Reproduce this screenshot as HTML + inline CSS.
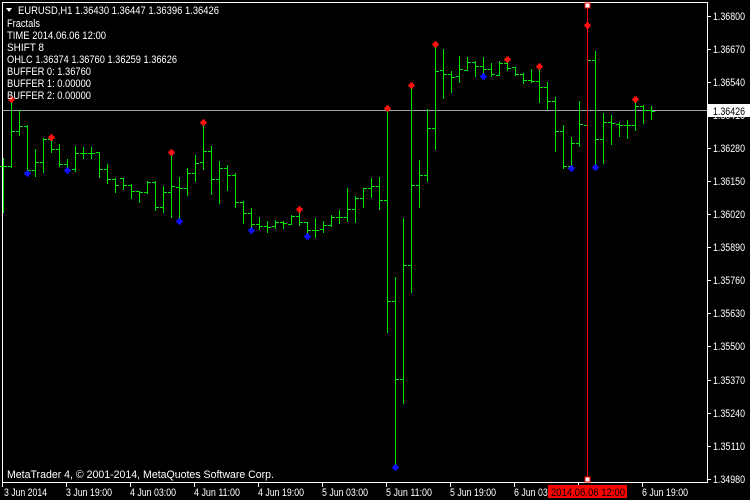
<!DOCTYPE html>
<html><head><meta charset="utf-8"><style>
html,body{margin:0;padding:0;background:#000;width:750px;height:500px;overflow:hidden}
svg{display:block}
text{font-family:"Liberation Sans",sans-serif;font-size:11px;fill:#fff}
</style></head><body>
<svg width="750" height="500" viewBox="0 0 750 500" shape-rendering="crispEdges">
<rect width="750" height="500" fill="#000"/>
<path d="M2.5 2.5H707.5V482.5H2.5Z" fill="none" stroke="#fff" stroke-width="1"/>
<path d="M3 110.5H707" stroke="#9aa4ae" stroke-width="1"/>
<path fill="none" stroke="#00e600" stroke-width="1" d="M3.5 158V213M0 166.5h3M4 166.5h3M11.5 100V168M8 166.5h3M12 131.5h3M19.5 110V136M16 131.5h3M20 126.5h3M27.5 125V174M24 126.5h3M28 170.5h3M35.5 149V177M32 170.5h3M36 162.5h3M43.5 138V173M40 162.5h3M44 139.5h3M51.5 138V153M48 139.5h3M52 149.5h3M59.5 144V167M56 149.5h3M60 164.5h3M67.5 159V171M64 164.5h3M68 169.5h3M75.5 146V172M72 169.5h3M76 153.5h3M83.5 147V159M80 153.5h3M84 153.5h3M91.5 147V159M88 153.5h3M92 153.5h3M99.5 152V178M96 152.5h3M100 169.5h3M107.5 164V184M104 169.5h3M108 179.5h3M115.5 178V193M112 179.5h3M116 185.5h3M123.5 178V190M120 178.5h3M124 185.5h3M131.5 184V199M128 185.5h3M132 191.5h3M139.5 191V203M136 191.5h3M140 192.5h3M147.5 181V194M144 192.5h3M148 182.5h3M155.5 181V211M152 182.5h3M156 207.5h3M163.5 186V213M160 207.5h3M164 192.5h3M171.5 155V218M168 192.5h3M172 186.5h3M179.5 177V223M176 187.5h3M180 188.5h3M187.5 168V196M184 188.5h3M188 173.5h3M195.5 155V182M192 173.5h3M196 163.5h3M203.5 122V170M200 162.5h3M204 151.5h3M211.5 146V195M208 151.5h3M212 179.5h3M219.5 161V204M216 179.5h3M220 168.5h3M227.5 165V191M224 168.5h3M228 175.5h3M235.5 173V208M232 175.5h3M236 202.5h3M243.5 201V224M240 202.5h3M244 213.5h3M251.5 208V229M248 213.5h3M252 224.5h3M259.5 217V230M256 224.5h3M260 226.5h3M267.5 221V233M264 226.5h3M268 227.5h3M275.5 220V229M272 226.5h3M276 222.5h3M283.5 221V229M280 222.5h3M284 223.5h3M291.5 215V225M288 224.5h3M292 216.5h3M299.5 209V226M296 216.5h3M300 222.5h3M307.5 222V235M304 222.5h3M308 230.5h3M315.5 218V238M312 230.5h3M316 230.5h3M323.5 221V233M320 229.5h3M324 225.5h3M331.5 215V227M328 225.5h3M332 217.5h3M339.5 210V224M336 217.5h3M340 217.5h3M347.5 188V222M344 217.5h3M348 209.5h3M355.5 196V223M352 209.5h3M356 198.5h3M363.5 188V208M360 198.5h3M364 188.5h3M371.5 178V198M368 188.5h3M372 186.5h3M379.5 177V210M376 186.5h3M380 200.5h3M387.5 109V333M384 200.5h3M388 301.5h3M395.5 277V468M392 301.5h3M396 379.5h3M403.5 218V404M400 379.5h3M404 265.5h3M411.5 85V293M408 265.5h3M412 185.5h3M419.5 160V208M416 185.5h3M420 175.5h3M427.5 109V182M424 175.5h3M428 128.5h3M435.5 44V150M432 128.5h3M436 71.5h3M443.5 49V99M440 70.5h3M444 74.5h3M451.5 71V93M448 74.5h3M452 77.5h3M459.5 56V83M456 76.5h3M460 69.5h3M467.5 57V71M464 70.5h3M468 62.5h3M475.5 61V77M472 62.5h3M476 66.5h3M483.5 57V76M480 66.5h3M484 69.5h3M491.5 63V77M488 69.5h3M492 74.5h3M499.5 61V76M496 75.5h3M500 63.5h3M507.5 59V71M504 63.5h3M508 68.5h3M515.5 67V76M512 67.5h3M516 74.5h3M523.5 73V84M520 74.5h3M524 80.5h3M531.5 69V83M528 80.5h3M532 81.5h3M539.5 66V103M536 81.5h3M540 87.5h3M547.5 82V110M544 87.5h3M548 101.5h3M555.5 97V152M552 101.5h3M556 131.5h3M563.5 125V169M560 131.5h3M564 166.5h3M571.5 137V168M568 166.5h3M572 143.5h3M579.5 101V147M576 143.5h3M580 124.5h3M587.5 26V155M584 125.5h3M588 60.5h3M595.5 51V168M592 60.5h3M596 139.5h3M603.5 113V164M600 139.5h3M604 122.5h3M611.5 115V145M608 122.5h3M612 123.5h3M619.5 122V137M616 124.5h3M620 125.5h3M627.5 120V139M624 125.5h3M628 125.5h3M635.5 99V131M632 125.5h3M636 106.5h3M643.5 105V124M640 106.5h3M644 110.5h3M651.5 106V120M648 110.5h3M652 111.5h3"/>
<path d="M587.5 5V480" stroke="#f00" stroke-width="1"/>
<rect x="585" y="3" width="5" height="5" fill="#fff" stroke="#f00" stroke-width="1"/>
<rect x="585" y="477" width="5" height="5" fill="#fff" stroke="#f00" stroke-width="1"/>
<defs>
<path id="fr" d="M-1 -2.5h3v6h-3zM-2.5 -1h6v3h-6z"/>
</defs>
<g fill="#ff1010">
<use href="#fr" x="11" y="99"/><use href="#fr" x="51" y="137"/><use href="#fr" x="171" y="152"/><use href="#fr" x="203" y="122"/><use href="#fr" x="299" y="209"/><use href="#fr" x="387" y="108"/><use href="#fr" x="411" y="85"/><use href="#fr" x="435" y="44"/><use href="#fr" x="507" y="59"/><use href="#fr" x="539" y="66"/><use href="#fr" x="587" y="25"/><use href="#fr" x="635" y="99"/>
</g>
<g fill="#1010ff">
<use href="#fr" x="27" y="173"/><use href="#fr" x="67" y="170"/><use href="#fr" x="179" y="221"/><use href="#fr" x="251" y="230"/><use href="#fr" x="307" y="236"/><use href="#fr" x="395" y="467"/><use href="#fr" x="483" y="76"/><use href="#fr" x="571" y="168"/><use href="#fr" x="595" y="167"/>
</g>
<path stroke="#fff" stroke-width="1" d="M707 16.5h4M707 49.5h4M707 82.5h4M707 115.5h4M707 148.5h4M707 181.5h4M707 214.5h4M707 247.5h4M707 280.5h4M707 313.5h4M707 346.5h4M707 380.5h4M707 413.5h4M707 446.5h4M707 479.5h4"/>
<g lengthAdjust="spacingAndGlyphs">
<text x="713" y="20" textLength="32" lengthAdjust="spacingAndGlyphs">1.36800</text>
<text x="713" y="53" textLength="32" lengthAdjust="spacingAndGlyphs">1.36670</text>
<text x="713" y="86" textLength="32" lengthAdjust="spacingAndGlyphs">1.36540</text>
<text x="713" y="119" textLength="32" lengthAdjust="spacingAndGlyphs">1.36410</text>
<text x="713" y="152" textLength="32" lengthAdjust="spacingAndGlyphs">1.36280</text>
<text x="713" y="185" textLength="32" lengthAdjust="spacingAndGlyphs">1.36150</text>
<text x="713" y="218" textLength="32" lengthAdjust="spacingAndGlyphs">1.36020</text>
<text x="713" y="251" textLength="32" lengthAdjust="spacingAndGlyphs">1.35890</text>
<text x="713" y="284" textLength="32" lengthAdjust="spacingAndGlyphs">1.35760</text>
<text x="713" y="317" textLength="32" lengthAdjust="spacingAndGlyphs">1.35630</text>
<text x="713" y="350" textLength="32" lengthAdjust="spacingAndGlyphs">1.35500</text>
<text x="713" y="384" textLength="32" lengthAdjust="spacingAndGlyphs">1.35370</text>
<text x="713" y="417" textLength="32" lengthAdjust="spacingAndGlyphs">1.35240</text>
<text x="713" y="450" textLength="32" lengthAdjust="spacingAndGlyphs">1.35110</text>
<text x="713" y="483" textLength="32" lengthAdjust="spacingAndGlyphs">1.34980</text>
</g>
<rect x="708" y="104" width="42" height="13" fill="#fff"/>
<text x="713" y="115" style="fill:#000" textLength="32" lengthAdjust="spacingAndGlyphs">1.36426</text>
<path stroke="#fff" stroke-width="1" d="M2.5 482v5M66.5 482v5M130.5 482v5M194.5 482v5M258.5 482v5M322.5 482v5M386.5 482v5M450.5 482v5M514.5 482v5M578.5 482v5M642.5 482v5"/>
<g>
<text x="4" y="496" textLength="43" lengthAdjust="spacingAndGlyphs">3 Jun 2014</text>
<text x="66" y="496" textLength="46" lengthAdjust="spacingAndGlyphs">3 Jun 19:00</text>
<text x="130" y="496" textLength="46" lengthAdjust="spacingAndGlyphs">4 Jun 03:00</text>
<text x="194" y="496" textLength="46" lengthAdjust="spacingAndGlyphs">4 Jun 11:00</text>
<text x="258" y="496" textLength="46" lengthAdjust="spacingAndGlyphs">4 Jun 19:00</text>
<text x="322" y="496" textLength="46" lengthAdjust="spacingAndGlyphs">5 Jun 03:00</text>
<text x="386" y="496" textLength="46" lengthAdjust="spacingAndGlyphs">5 Jun 11:00</text>
<text x="450" y="496" textLength="46" lengthAdjust="spacingAndGlyphs">5 Jun 19:00</text>
<text x="514" y="496" textLength="46" lengthAdjust="spacingAndGlyphs">6 Jun 03:00</text>
<text x="642" y="496" textLength="46" lengthAdjust="spacingAndGlyphs">6 Jun 19:00</text>
</g>
<rect x="548" y="485" width="79" height="13" fill="#f00"/>
<text x="551" y="496" style="fill:#000" textLength="74" lengthAdjust="spacingAndGlyphs">2014.06.06 12:00</text>
<path d="M6 8h6l-3 4z" fill="#fff"/>
<text x="18" y="14" textLength="201" lengthAdjust="spacingAndGlyphs">EURUSD,H1  1.36430 1.36447 1.36396 1.36426</text>
<text x="7" y="27" textLength="33" lengthAdjust="spacingAndGlyphs">Fractals</text>
<text x="7" y="39" textLength="99" lengthAdjust="spacingAndGlyphs">TIME 2014.06.06 12:00</text>
<text x="7" y="51" textLength="37" lengthAdjust="spacingAndGlyphs">SHIFT 8</text>
<text x="7" y="63" textLength="170" lengthAdjust="spacingAndGlyphs">OHLC 1.36374 1.36760 1.36259 1.36626</text>
<text x="7" y="75" textLength="84" lengthAdjust="spacingAndGlyphs">BUFFER 0: 1.36760</text>
<text x="7" y="87" textLength="84" lengthAdjust="spacingAndGlyphs">BUFFER 1: 0.00000</text>
<text x="7" y="99" textLength="84" lengthAdjust="spacingAndGlyphs">BUFFER 2: 0.00000</text>
<text x="7" y="478" textLength="267" lengthAdjust="spacingAndGlyphs">MetaTrader 4, © 2001-2014, MetaQuotes Software Corp.</text>
</svg>
</body></html>
